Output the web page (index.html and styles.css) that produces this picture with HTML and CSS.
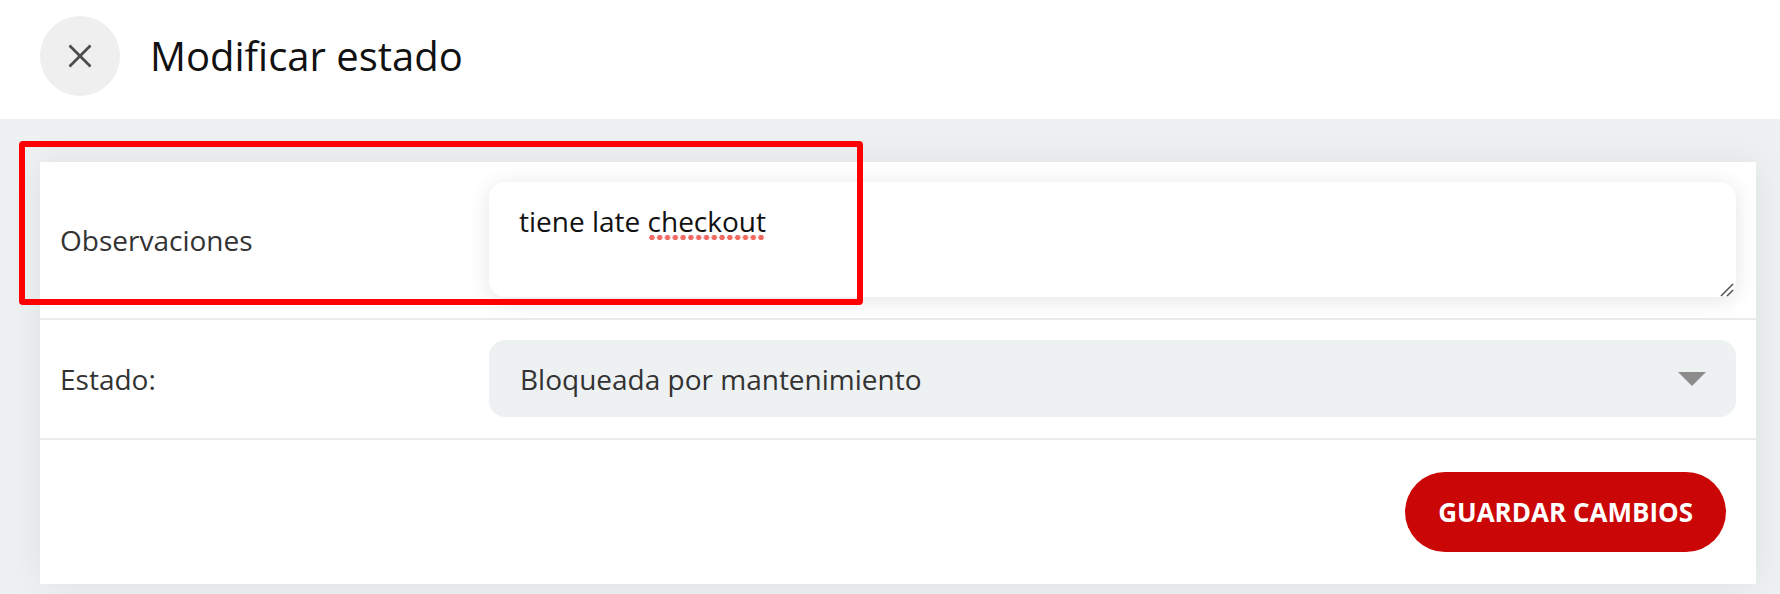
FILE: index.html
```html
<!DOCTYPE html>
<html lang="es">
<head>
<meta charset="utf-8">
<title>Modificar estado</title>
<link rel="stylesheet" href="styles.css">
</head>
<body>
<header class="topbar">
  <button class="close-btn" aria-label="Cerrar">
    <svg class="close-icon" viewBox="0 0 24 24" width="24" height="24">
      <line x1="1.5" y1="1.5" x2="22.5" y2="22.5"/>
      <line x1="22.5" y1="1.5" x2="1.5" y2="22.5"/>
    </svg>
  </button>
  <h1 class="title">Modificar estado</h1>
</header>
<main class="content">
  <section class="card">
    <div class="row row-obs">
      <label class="label">Observaciones</label>
      <div class="textarea" role="textbox">tiene late <span class="misspelled">checkout</span>
        <svg class="grip" viewBox="0 0 14 14" width="14" height="14">
          <line x1="1" y1="13" x2="13" y2="1"/>
          <line x1="7" y1="13" x2="13" y2="7"/>
        </svg>
      </div>
    </div>
    <div class="row row-state">
      <label class="label">Estado:</label>
      <div class="select">
        <span class="select-value">Bloqueada por mantenimiento</span>
        <svg class="caret" viewBox="0 0 28 14" width="28" height="14"><polygon points="0,0 28,0 14,14"/></svg>
      </div>
    </div>
    <div class="row row-actions">
      <button class="save-btn">GUARDAR CAMBIOS</button>
    </div>
  </section>
</main>
<div class="annotation"></div>
</body>
</html>
```
FILE: styles.css
```css
* { box-sizing: border-box; }
html, body { margin: 0; padding: 0; }
body {
  position: relative;
  width: 1780px;
  height: 594px;
  overflow: hidden;
  background: #eef1f2;
  font-family: "Open Sans", "Noto Sans", sans-serif;
  color: #333;
}
.topbar {
  display: flex;
  align-items: center;
  gap: 30px;
  height: 119px;
  padding: 16px 40px 23px;
  background: #fff;
}
.close-btn {
  width: 80px;
  height: 80px;
  border: none;
  border-radius: 50%;
  background: #efefef;
  display: flex;
  align-items: center;
  justify-content: center;
  padding: 0;
}
.close-icon line {
  stroke: #4a4a4a;
  stroke-width: 2.6;
}
.title {
  margin: 0;
  font-size: 40px;
  font-weight: 400;
  color: #111;
  line-height: 1;
}
.content {
  padding: 43px 24px 10px 40px;
}
.card {
  background: #fff;
  box-shadow: 0 0 36px rgba(0, 0, 0, 0.07);
}
.row {
  display: grid;
  grid-template-columns: 429px 1fr;
  align-items: center;
  padding: 20px 20px 21px;
  border-bottom: 2px solid #e9ebec;
}
.label {
  font-size: 28px;
  color: #333;
}
.textarea {
  position: relative;
  height: 115px;
  padding: 18px 30px;
  border-radius: 16px;
  background: #fff;
  box-shadow: 0 3px 22px rgba(0, 0, 0, 0.11);
  font-size: 28px;
  line-height: 42px;
  color: #111;
}
.misspelled {
  padding-bottom: 1px;
  background-image: radial-gradient(circle at 3.9px 3.5px, #f06a62 2.4px, rgba(240, 106, 98, 0) 2.9px);
  background-size: 7.8px 7px;
  background-repeat: repeat-x;
  background-position: 0 100%;
}
.grip {
  position: absolute;
  right: 2px;
  bottom: 0;
}
.grip line {
  stroke: #555;
  stroke-width: 1.6;
}
.select {
  display: flex;
  align-items: center;
  justify-content: space-between;
  height: 77px;
  padding: 0 30px 0 31px;
  border-radius: 16px;
  background: #eef1f2;
  font-size: 28px;
  color: #333;
}
.caret polygon {
  fill: #8c8c8c;
}
.row-actions {
  display: flex;
  justify-content: flex-end;
  padding: 32px 30px;
  border-bottom: none;
}
.save-btn {
  height: 80px;
  padding: 0 33px;
  border: none;
  border-radius: 40px;
  background: #cb0606;
  color: #fff;
  font-family: "Open Sans", "Noto Sans", sans-serif;
  font-size: 26px;
  font-weight: 700;
  letter-spacing: 0;
}
.annotation {
  position: absolute;
  left: 19px;
  top: 141px;
  width: 844px;
  height: 164px;
  border: 6px solid #ff0000;
  border-radius: 4px;
}
```
